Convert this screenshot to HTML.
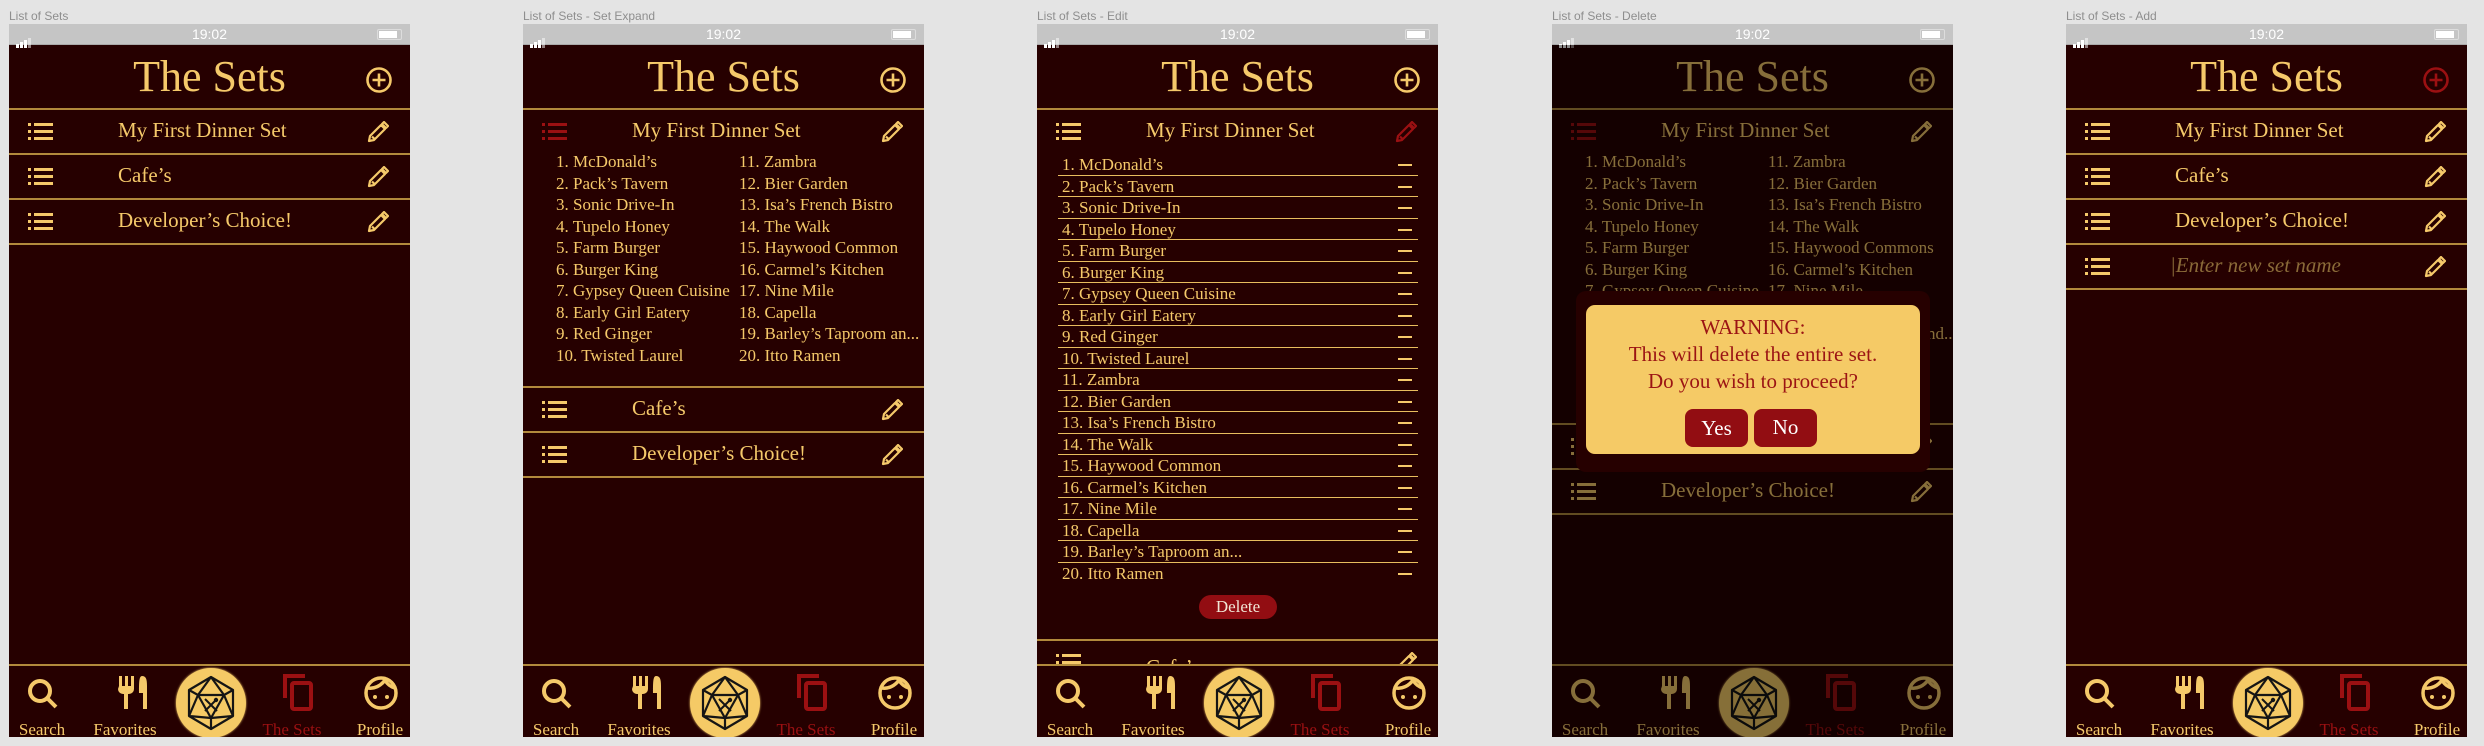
<!DOCTYPE html>
<html><head><meta charset="utf-8"><style>
*{margin:0;padding:0;box-sizing:border-box}
body{width:2484px;height:746px;background:#e4e4e4;position:relative;overflow:hidden;font-family:"Liberation Serif",serif}
.lbl{position:absolute;top:9px;font:12px "Liberation Sans",sans-serif;color:#8e8e8e}
.ph{position:absolute;top:24px;width:401px;height:713px;background:#260000;overflow:hidden}
.sb{position:absolute;left:0;top:0;width:401px;height:21px;background:#c5c5c5;border-bottom:1px solid #aaa}
.sb .t{position:absolute;left:0;width:401px;text-align:center;top:2px;font:14px "Liberation Sans",sans-serif;color:#fff}
.sig{position:absolute;left:7px;top:6px}
.sig i{display:inline-block;width:3px;background:#fff;margin-right:1px;vertical-align:bottom}
.bat{position:absolute;right:8px;top:5px;width:25px;height:11px;border:1px solid #ddd;border-radius:2px;padding:1px}
.bat b{display:block;width:18px;height:7px;background:#fff}
.title{position:absolute;left:0;top:25px;width:401px;text-align:center;font-size:44px;color:#f5c96a;line-height:56px}
.abs{position:absolute}
.row{position:absolute;left:0;width:401px;height:45px;border-bottom:2px solid #b28a3c}
.row .tx{position:absolute;left:109px;top:0;line-height:41px;font-size:21px;color:#f5c96a;white-space:nowrap}
.row .li{position:absolute;left:19px;top:13px}
.row .pe{position:absolute;left:358px;top:11px}
.hl{position:absolute;left:0;width:401px;height:2px;background:#b28a3c}
.it{position:absolute;font-size:17px;color:#f5c96a;line-height:21.5px;white-space:nowrap}
.eit{position:absolute;left:21px;width:360px;height:21.5px;border-bottom:1.5px solid #e8bd5e;font-size:17px;color:#f5c96a;line-height:21px;padding-left:4px}
.eit:after{content:"";position:absolute;right:6px;top:10px;width:14px;height:2px;background:#f5c96a}
.tab{position:absolute;left:0;top:640px;width:401px;height:73px;background:#260000;border-top:2px solid #b28a3c}
.tl{position:absolute;top:54px;font-size:17px;color:#f5c96a;text-align:center;width:90px;line-height:20px}
.dice{position:absolute;left:167px;top:2px;width:70px;height:70px;border-radius:50%;background:#f5ca66;box-shadow:0 0 2px #f5ca66}
.dim{position:absolute;left:0;top:21px;width:401px;height:692px;background:rgba(0,0,0,.45)}
</style></head><body>
<svg width="0" height="0" style="position:absolute"><defs>
<symbol id="li" viewBox="0 0 25 17"><rect x="0" y="0" width="3" height="3"/><rect x="6" y="0" width="19" height="3"/><rect x="0" y="7" width="3" height="3"/><rect x="6" y="7" width="19" height="3"/><rect x="0" y="14" width="3" height="3"/><rect x="6" y="14" width="19" height="3"/></symbol>
<symbol id="pe" viewBox="0 0 22 22"><path d="M3 15 L14 4 L18 8 L7 19 L2 20 Z M15 3 L17 1 L21 5 L19 7 Z M5 15.5 L7.5 18" fill="none" stroke="currentColor" stroke-width="2.2" stroke-linejoin="round"/></symbol>
<symbol id="pl" viewBox="0 0 28 28"><circle cx="14" cy="14" r="11.5" fill="none" stroke="currentColor" stroke-width="2.6"/><path d="M14 7.5V20.5M7.5 14H20.5" stroke="currentColor" stroke-width="2.6"/></symbol>
<symbol id="tabs" viewBox="0 0 401 73">
<g fill="none" stroke="#f5c96a" stroke-width="4"><circle cx="31" cy="25" r="10"/><path d="M38 32L47 41"/></g>
<g fill="#f5c96a"><rect x="110" y="10" width="3" height="12"/><rect x="116" y="10" width="3" height="12"/><rect x="122" y="10" width="3" height="12"/><path d="M110 20h15v3a5 5 0 0 1-5 5h-1v15h-4v-15h-1a5 5 0 0 1-5-5z"/><path d="M133 10c4 0 5 3 5 10v23h-4v-16h-4c0-10 0-17 3-17z"/></g>
<g fill="none" stroke="#9b1012" stroke-width="4"><path d="M276 32V10h20"/><rect x="283" y="17" width="19" height="26" rx="2"/></g>
<g fill="none" stroke="#f5c96a" stroke-width="3.5"><circle cx="372" cy="27" r="15"/><path d="M359 22c6 1 13-2 17-8c2 4 6 7 10 8"/></g>
<g fill="#f5c96a"><circle cx="366" cy="31" r="2"/><circle cx="378" cy="31" r="2"/></g>
</symbol>
<symbol id="dice" viewBox="0 0 70 70"><g fill="none" stroke="#151515" stroke-width="2.2" stroke-linejoin="round"><path d="M35 9L57 22V48L35 61L13 48V22Z"/><path d="M22 27H48L35 50Z"/><path d="M35 9L22 27M35 9L48 27M13 22L22 27M57 22L48 27M13 48L22 27M57 48L48 27M13 48L35 50M57 48L35 50M35 61L35 50"/></g><path d="M29 31L41 43M41 31L29 43" stroke="#151515" stroke-width="2"/><circle cx="40" cy="32" r="2.2" fill="#151515"/></symbol>
</defs></svg>

<div class="lbl" style="left:9px">List of Sets</div>
<div class="lbl" style="left:523px">List of Sets - Set Expand</div>
<div class="lbl" style="left:1037px">List of Sets - Edit</div>
<div class="lbl" style="left:1552px">List of Sets - Delete</div>
<div class="lbl" style="left:2066px">List of Sets - Add</div>

<!-- PHONE 1 -->
<div class="ph" style="left:9px">
<div class="sb"><div class="sig"><i style="height:4px"></i><i style="height:6px"></i><i style="height:8px"></i><i style="height:10px;opacity:.5"></i></div><div class="t">19:02</div><div class="bat"><b></b></div></div>
<div class="title">The Sets</div>
<svg class="abs" style="left:356px;top:42px;color:#f5c96a" width="28" height="28"><use href="#pl"/></svg>
<div class="hl" style="top:84px"></div>
<div class="row" style="top:86px"><svg class="li" width="25" height="17" fill="#f5c96a"><use href="#li"/></svg><div class="tx">My First Dinner Set</div><svg class="pe" width="22" height="22" style="color:#f5c96a"><use href="#pe"/></svg></div>
<div class="row" style="top:131px"><svg class="li" width="25" height="17" fill="#f5c96a"><use href="#li"/></svg><div class="tx">Cafe’s</div><svg class="pe" width="22" height="22" style="color:#f5c96a"><use href="#pe"/></svg></div>
<div class="row" style="top:176px"><svg class="li" width="25" height="17" fill="#f5c96a"><use href="#li"/></svg><div class="tx">Developer’s Choice!</div><svg class="pe" width="22" height="22" style="color:#f5c96a"><use href="#pe"/></svg></div>
<div class="tab"><svg class="abs" style="left:0;top:0" width="401" height="73"><use href="#tabs"/></svg><div class="dice"><svg width="70" height="70"><use href="#dice"/></svg></div>
<div class="tl" style="left:-12px">Search</div><div class="tl" style="left:71px">Favorites</div><div class="tl" style="left:238px;color:#9b1012">The Sets</div><div class="tl" style="left:326px">Profile</div></div>
</div>

<!-- PHONE 2 -->
<div class="ph" style="left:523px">
<div class="sb"><div class="sig"><i style="height:4px"></i><i style="height:6px"></i><i style="height:8px"></i><i style="height:10px;opacity:.5"></i></div><div class="t">19:02</div><div class="bat"><b></b></div></div>
<div class="title">The Sets</div>
<svg class="abs" style="left:356px;top:42px;color:#f5c96a" width="28" height="28"><use href="#pl"/></svg>
<div class="hl" style="top:84px"></div>
<div class="row" style="top:86px;height:278px"><svg class="li" width="25" height="17" fill="#9b1012"><use href="#li"/></svg><div class="tx">My First Dinner Set</div><svg class="pe" width="22" height="22" style="color:#f5c96a"><use href="#pe"/></svg>
<div class="it" style="left:33px;top:41px">1. McDonald’s<br>2. Pack’s Tavern<br>3. Sonic Drive-In<br>4. Tupelo Honey<br>5. Farm Burger<br>6. Burger King<br>7. Gypsey Queen Cuisine<br>8. Early Girl Eatery<br>9. Red Ginger<br>10. Twisted Laurel</div>
<div class="it" style="left:216px;top:41px">11. Zambra<br>12. Bier Garden<br>13. Isa’s French Bistro<br>14. The Walk<br>15. Haywood Common<br>16. Carmel’s Kitchen<br>17. Nine Mile<br>18. Capella<br>19. Barley’s Taproom an...<br>20. Itto Ramen</div></div>
<div class="row" style="top:364px"><svg class="li" width="25" height="17" fill="#f5c96a"><use href="#li"/></svg><div class="tx">Cafe’s</div><svg class="pe" width="22" height="22" style="color:#f5c96a"><use href="#pe"/></svg></div>
<div class="row" style="top:409px"><svg class="li" width="25" height="17" fill="#f5c96a"><use href="#li"/></svg><div class="tx">Developer’s Choice!</div><svg class="pe" width="22" height="22" style="color:#f5c96a"><use href="#pe"/></svg></div>
<div class="tab"><svg class="abs" style="left:0;top:0" width="401" height="73"><use href="#tabs"/></svg><div class="dice"><svg width="70" height="70"><use href="#dice"/></svg></div>
<div class="tl" style="left:-12px">Search</div><div class="tl" style="left:71px">Favorites</div><div class="tl" style="left:238px;color:#9b1012">The Sets</div><div class="tl" style="left:326px">Profile</div></div>
</div>

<!-- PHONE 3 -->
<div class="ph" style="left:1037px">
<div class="sb"><div class="sig"><i style="height:4px"></i><i style="height:6px"></i><i style="height:8px"></i><i style="height:10px;opacity:.5"></i></div><div class="t">19:02</div><div class="bat"><b></b></div></div>
<div class="title">The Sets</div>
<svg class="abs" style="left:356px;top:42px;color:#f5c96a" width="28" height="28"><use href="#pl"/></svg>
<div class="hl" style="top:84px"></div>
<div class="row" style="top:86px;height:531px;border:0"><svg class="li" width="25" height="17" fill="#f5c96a"><use href="#li"/></svg><div class="tx">My First Dinner Set</div><svg class="pe" width="22" height="22" style="color:#9b1012"><use href="#pe"/></svg></div>
<div class="eit" style="top:130px">1. McDonald’s</div>
<div class="eit" style="top:151.5px">2. Pack’s Tavern</div>
<div class="eit" style="top:173px">3. Sonic Drive-In</div>
<div class="eit" style="top:194.5px">4. Tupelo Honey</div>
<div class="eit" style="top:216px">5. Farm Burger</div>
<div class="eit" style="top:237.5px">6. Burger King</div>
<div class="eit" style="top:259px">7. Gypsey Queen Cuisine</div>
<div class="eit" style="top:280.5px">8. Early Girl Eatery</div>
<div class="eit" style="top:302px">9. Red Ginger</div>
<div class="eit" style="top:323.5px">10. Twisted Laurel</div>
<div class="eit" style="top:345px">11. Zambra</div>
<div class="eit" style="top:366.5px">12. Bier Garden</div>
<div class="eit" style="top:388px">13. Isa’s French Bistro</div>
<div class="eit" style="top:409.5px">14. The Walk</div>
<div class="eit" style="top:431px">15. Haywood Common</div>
<div class="eit" style="top:452.5px">16. Carmel’s Kitchen</div>
<div class="eit" style="top:474px">17. Nine Mile</div>
<div class="eit" style="top:495.5px">18. Capella</div>
<div class="eit" style="top:517px">19. Barley’s Taproom an...</div>
<div class="eit" style="top:538.5px;border:0">20. Itto Ramen</div>
<div class="abs" style="left:162px;top:571px;width:78px;height:24px;border-radius:12px;background:#920d12;color:#f1e6d6;font-size:17px;text-align:center;line-height:24px">Delete</div>
<div class="hl" style="top:615px"></div>
<div class="row" style="top:617px"><svg class="li" width="25" height="17" fill="#f5c96a"><use href="#li"/></svg><div class="tx" style="top:6px">Cafe’s</div><svg class="pe" width="22" height="22" style="color:#f5c96a"><use href="#pe"/></svg></div>
<div class="tab"><svg class="abs" style="left:0;top:0" width="401" height="73"><use href="#tabs"/></svg><div class="dice"><svg width="70" height="70"><use href="#dice"/></svg></div>
<div class="tl" style="left:-12px">Search</div><div class="tl" style="left:71px">Favorites</div><div class="tl" style="left:238px;color:#9b1012">The Sets</div><div class="tl" style="left:326px">Profile</div></div>
</div>

<!-- PHONE 4 -->
<div class="ph" style="left:1552px">
<div class="sb"><div class="sig"><i style="height:4px"></i><i style="height:6px"></i><i style="height:8px"></i><i style="height:10px;opacity:.5"></i></div><div class="t">19:02</div><div class="bat"><b></b></div></div>
<div class="title">The Sets</div>
<svg class="abs" style="left:356px;top:42px;color:#f5c96a" width="28" height="28"><use href="#pl"/></svg>
<div class="hl" style="top:84px"></div>
<div class="row" style="top:86px;height:315px"><svg class="li" width="25" height="17" fill="#9b1012"><use href="#li"/></svg><div class="tx">My First Dinner Set</div><svg class="pe" width="22" height="22" style="color:#f5c96a"><use href="#pe"/></svg>
<div class="it" style="left:33px;top:41px">1. McDonald’s<br>2. Pack’s Tavern<br>3. Sonic Drive-In<br>4. Tupelo Honey<br>5. Farm Burger<br>6. Burger King<br>7. Gypsey Queen Cuisine<br>8. Early Girl Eatery<br>9. Red Ginger<br>10. Twisted Laurel</div>
<div class="it" style="left:216px;top:41px">11. Zambra<br>12. Bier Garden<br>13. Isa’s French Bistro<br>14. The Walk<br>15. Haywood Commons<br>16. Carmel’s Kitchen<br>17. Nine Mile<br>18. Capella<br>19. Barley’s Taproom and...<br>20. Itto Ramen</div></div>
<div class="row" style="top:401px"><svg class="li" width="25" height="17" fill="#f5c96a"><use href="#li"/></svg><div class="tx">Cafe’s</div><svg class="pe" width="22" height="22" style="color:#f5c96a"><use href="#pe"/></svg></div>
<div class="row" style="top:446px"><svg class="li" width="25" height="17" fill="#f5c96a"><use href="#li"/></svg><div class="tx">Developer’s Choice!</div><svg class="pe" width="22" height="22" style="color:#f5c96a"><use href="#pe"/></svg></div>
<div class="tab"><svg class="abs" style="left:0;top:0" width="401" height="73"><use href="#tabs"/></svg><div class="dice"><svg width="70" height="70"><use href="#dice"/></svg></div>
<div class="tl" style="left:-12px">Search</div><div class="tl" style="left:71px">Favorites</div><div class="tl" style="left:238px;color:#9b1012">The Sets</div><div class="tl" style="left:326px">Profile</div></div>
<div class="dim"></div>
<div class="abs" style="left:24px;top:267px;width:354px;height:181px;background:#260000;border-radius:10px"></div>
<div class="abs" style="left:34px;top:281px;width:334px;height:149px;background:#f5ca66;border-radius:9px;color:#9b1414;font-size:21px;text-align:center;line-height:27px;padding-top:9px">WARNING:<br>This will delete the entire set.<br>Do you wish to proceed?</div>
<div class="abs" style="left:133px;top:385px;width:63px;height:38px;background:#920d12;border-radius:8px;color:#fff;font-size:21px;text-align:center;line-height:38px">Yes</div>
<div class="abs" style="left:202px;top:385px;width:63px;height:38px;background:#920d12;border-radius:8px;color:#fff;font-size:21px;text-align:center;line-height:36px">No</div>
</div>

<!-- PHONE 5 -->
<div class="ph" style="left:2066px">
<div class="sb"><div class="sig"><i style="height:4px"></i><i style="height:6px"></i><i style="height:8px"></i><i style="height:10px;opacity:.5"></i></div><div class="t">19:02</div><div class="bat"><b></b></div></div>
<div class="title">The Sets</div>
<svg class="abs" style="left:356px;top:42px;color:#9b1012" width="28" height="28"><use href="#pl"/></svg>
<div class="hl" style="top:84px"></div>
<div class="row" style="top:86px"><svg class="li" width="25" height="17" fill="#f5c96a"><use href="#li"/></svg><div class="tx">My First Dinner Set</div><svg class="pe" width="22" height="22" style="color:#f5c96a"><use href="#pe"/></svg></div>
<div class="row" style="top:131px"><svg class="li" width="25" height="17" fill="#f5c96a"><use href="#li"/></svg><div class="tx">Cafe’s</div><svg class="pe" width="22" height="22" style="color:#f5c96a"><use href="#pe"/></svg></div>
<div class="row" style="top:176px"><svg class="li" width="25" height="17" fill="#f5c96a"><use href="#li"/></svg><div class="tx">Developer’s Choice!</div><svg class="pe" width="22" height="22" style="color:#f5c96a"><use href="#pe"/></svg></div>
<div class="row" style="top:221px"><svg class="li" width="25" height="17" fill="#f5c96a"><use href="#li"/></svg><div class="tx" style="left:104px;font-style:italic;color:#8a6a38">|Enter new set name</div><svg class="pe" width="22" height="22" style="color:#f5c96a"><use href="#pe"/></svg></div>
<div class="tab"><svg class="abs" style="left:0;top:0" width="401" height="73"><use href="#tabs"/></svg><div class="dice"><svg width="70" height="70"><use href="#dice"/></svg></div>
<div class="tl" style="left:-12px">Search</div><div class="tl" style="left:71px">Favorites</div><div class="tl" style="left:238px;color:#9b1012">The Sets</div><div class="tl" style="left:326px">Profile</div></div>
</div>
</body></html>
